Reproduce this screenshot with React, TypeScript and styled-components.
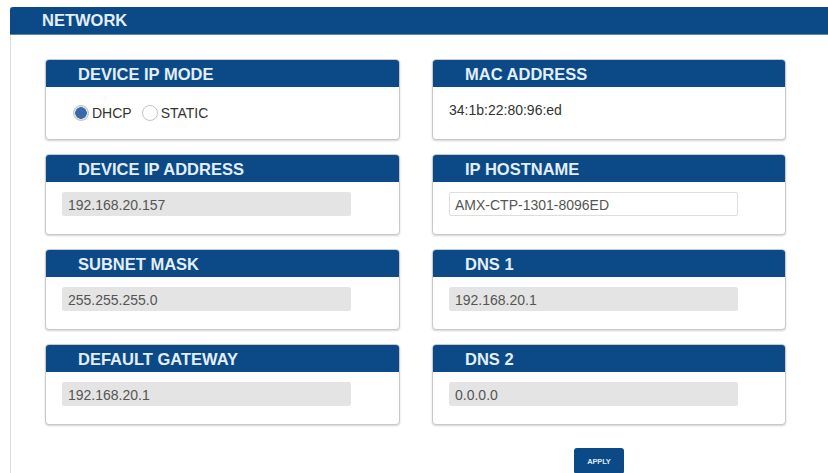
import styled, { createGlobalStyle } from "styled-components";

const BLUE = "#0b4a86";

const GlobalStyle = createGlobalStyle`
  body {
    margin: 0;
    background: #ffffff;
    font-family: "Liberation Sans", Arial, sans-serif;
  }
`;

type Field = {
  title: string;
  value?: string;
  kind: "radio" | "text" | "input" | "readonly";
};

const leftFields: Field[] = [
  { title: "DEVICE IP MODE", kind: "radio" },
  { title: "DEVICE IP ADDRESS", value: "192.168.20.157", kind: "readonly" },
  { title: "SUBNET MASK", value: "255.255.255.0", kind: "readonly" },
  { title: "DEFAULT GATEWAY", value: "192.168.20.1", kind: "readonly" },
];

const rightFields: Field[] = [
  { title: "MAC ADDRESS", value: "34:1b:22:80:96:ed", kind: "text" },
  { title: "IP HOSTNAME", value: "AMX-CTP-1301-8096ED", kind: "input" },
  { title: "DNS 1", value: "192.168.20.1", kind: "readonly" },
  { title: "DNS 2", value: "0.0.0.0", kind: "readonly" },
];

const FieldBody = ({ field }: { field: Field }) => {
  if (field.kind === "radio") {
    return (
      <RadioRow>
        <RadioOption>
          <RadioDot $checked />
          DHCP
        </RadioOption>
        <RadioOption>
          <RadioDot />
          STATIC
        </RadioOption>
      </RadioRow>
    );
  }
  if (field.kind === "text") {
    return <PlainValue>{field.value}</PlainValue>;
  }
  return <ValueBox $editable={field.kind === "input"}>{field.value}</ValueBox>;
};

const Column = ({ fields }: { fields: Field[] }) => (
  <Stack>
    {fields.map((f) => (
      <Card key={f.title}>
        <CardHeader>{f.title}</CardHeader>
        <CardBody>
          <FieldBody field={f} />
        </CardBody>
      </Card>
    ))}
  </Stack>
);

const App = () => {
  return (
    <>
      <GlobalStyle />
      <Page>
        <Section>
          <SectionTitle>NETWORK</SectionTitle>
          <Columns>
            <Column fields={leftFields} />
            <Column fields={rightFields} />
            <div />
            <Footer>
              <ApplyButton>APPLY</ApplyButton>
            </Footer>
          </Columns>
        </Section>
      </Page>
    </>
  );
};

export default App;

const Page = styled.div`
  padding: 7px 0 0 10px;
  height: 466px;
  overflow: hidden;
`;
const Section = styled.div`
  border-left: 1px solid #dcdcdc;
  height: 100%;
`;
const SectionTitle = styled.div`
  height: 27px;
  line-height: 27px;
  margin-left: -1px;
  padding-left: 32px;
  background: ${BLUE};
  border-radius: 3px 0 0 0;
  border-bottom: 1px solid #5b86b3;
  color: #e3eef8;
  font-size: 16.5px;
  font-weight: bold;
`;
const Columns = styled.div`
  display: grid;
  grid-template-columns: 355px 354px;
  column-gap: 32px;
  padding: 24px 0 0 34px;
`;
const Stack = styled.div`
  display: flex;
  flex-direction: column;
  gap: 14px;
`;
const Card = styled.div`
  box-sizing: border-box;
  height: 81px;
  border: 1px solid #c9c9c9;
  border-radius: 4px;
  box-shadow: 0 1px 2px rgba(0, 0, 0, 0.18);
  overflow: hidden;
  background: #fff;
`;
const CardHeader = styled.div`
  height: 27px;
  line-height: 28px;
  padding-left: 32px;
  background: ${BLUE};
  color: #e3eef8;
  font-size: 16.5px;
  font-weight: bold;
`;
const CardBody = styled.div`
  padding: 10px 16px 0 16px;
`;
const ValueBox = styled.div<{ $editable?: boolean }>`
  box-sizing: border-box;
  width: 289px;
  height: 24px;
  line-height: 24px;
  padding-left: 5px;
  font-size: 14px;
  color: #555;
  background: ${(p) => (p.$editable ? "#fff" : "#e4e4e4")};
  border: 1px solid ${(p) => (p.$editable ? "#dedede" : "#e4e4e4")};
  border-radius: 2px;
`;
const PlainValue = styled.div`
  padding: 5px 0 0 0;
  font-size: 14px;
  color: #333;
`;
const RadioRow = styled.div`
  display: flex;
  align-items: center;
  gap: 10px;
  padding: 8px 0 0 11px;
`;
const RadioOption = styled.label`
  display: flex;
  align-items: center;
  gap: 3px;
  font-size: 14px;
  color: #333;
`;
const RadioDot = styled.span<{ $checked?: boolean }>`
  box-sizing: border-box;
  width: 16px;
  height: 16px;
  border-radius: 50%;
  border: 1px solid #c4c4c4;
  background: ${(p) =>
    p.$checked ? "radial-gradient(circle, #3a69a6 0 5.5px, #d9e1ea 6px)" : "#fff"};
`;
const Footer = styled.div`
  padding: 23px 0 0 142px;
`;
const ApplyButton = styled.button`
  width: 50px;
  height: 26px;
  border: none;
  border-radius: 3px;
  background: ${BLUE};
  color: #dfe9f3;
  font-family: "Liberation Sans", Arial, sans-serif;
  font-size: 7.5px;
  font-weight: bold;
  letter-spacing: -0.2px;
  padding: 0;
`;
